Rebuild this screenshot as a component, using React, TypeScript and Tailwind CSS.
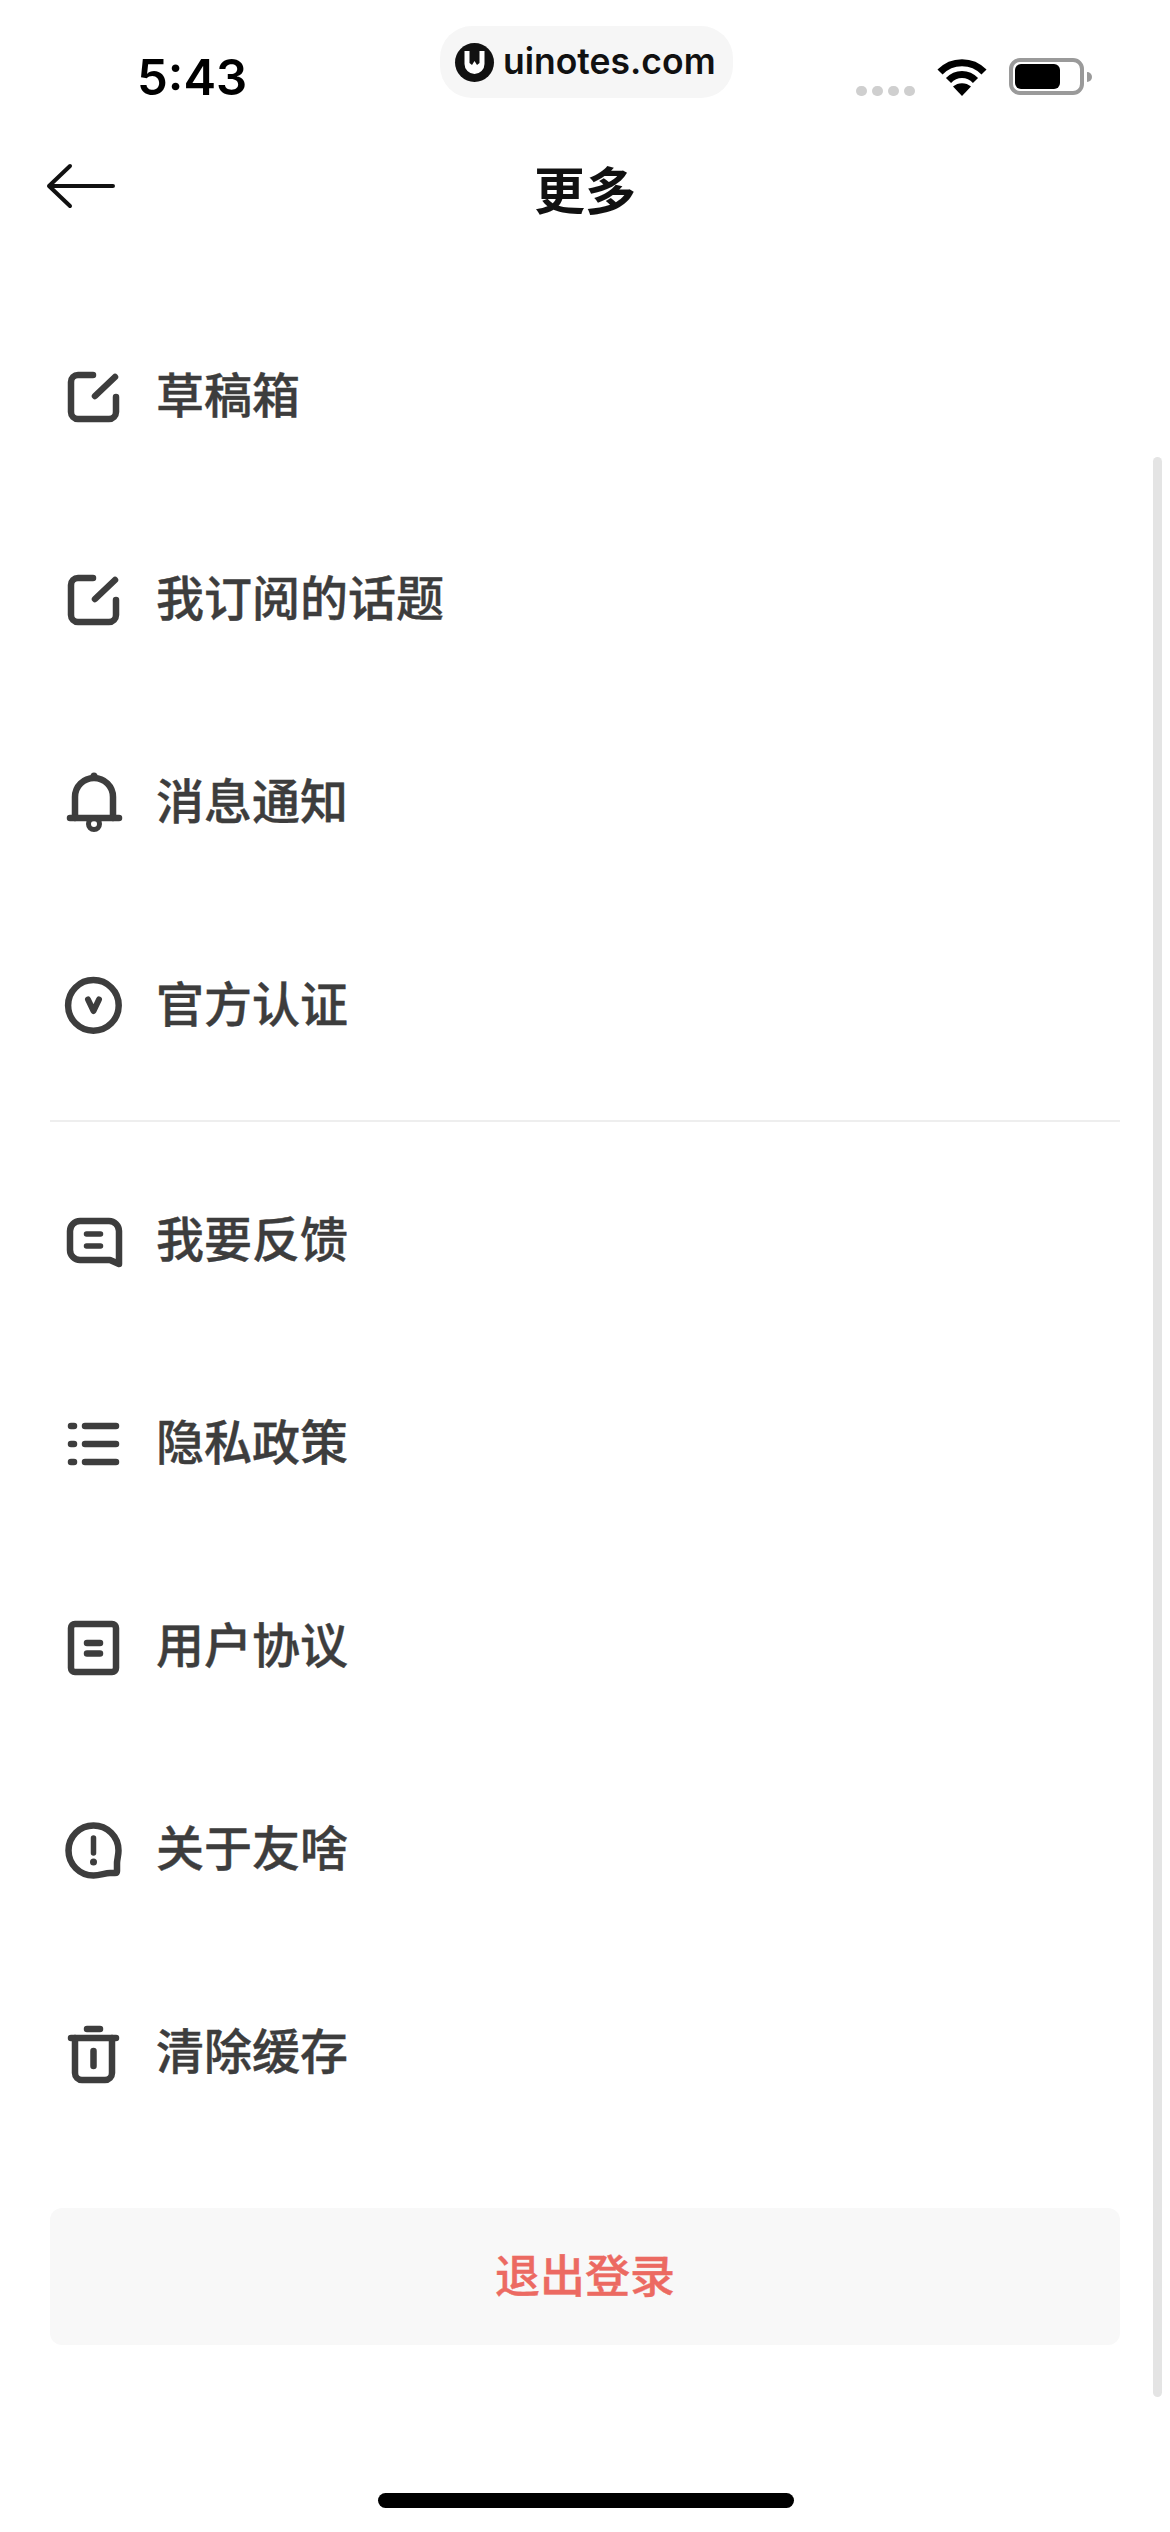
import React from "react";

const cjk = "font-['Inter','Noto_Sans_CJK_SC',sans-serif]";

function Icon({ children }: { children: React.ReactNode }) {
  return (
    <svg
      viewBox="0 0 66 66"
      width={66}
      height={66}
      fill="none"
      stroke="#3d3d3d"
      strokeWidth={6.5}
      strokeLinecap="round"
      strokeLinejoin="round"
      className="shrink-0"
    >
      {children}
    </svg>
  );
}

const EditIcon = () => (
  <Icon>
    <path d="M33 12H18a7 7 0 0 0-7 7V49a7 7 0 0 0 7 7H49a7 7 0 0 0 7-7V34" />
    <path d="M35 33L55 14" />
  </Icon>
);
const BellIcon = () => (
  <Icon>
    <path d="M15 49V28a19 19 0 0 1 38 0V49" />
    <path d="M10 49H59" />
    <circle cx={34} cy={7} r={3.5} fill="#3d3d3d" stroke="none" />
    <circle cx={34} cy={55} r={5.5} strokeWidth={5} />
  </Icon>
);
const BadgeIcon = () => (
  <Icon>
    <circle cx={33.4} cy={33.4} r={25.3} />
    <path d="M28 27.500L33.500 39L39 27.500" strokeWidth={6} />
  </Icon>
);
const ChatIcon = () => (
  <Icon>
    <path d="M20 14H49a10 10 0 0 1 10 10V57L50 53H20a10 10 0 0 1-10-10V24a10 10 0 0 1 10-10Z" />
    <path d="M26.500 27H40.500M26.500 39H40.500" strokeWidth={5.5} />
  </Icon>
);
const ListIcon = () => (
  <Icon>
    <path d="M11 16H14M11 34H14M11 52H14" />
    <path d="M25 16H56M25 34H56M25 52H56" />
  </Icon>
);
const DocIcon = () => (
  <Icon>
    <rect x={11} y={11} width={45} height={48} rx={4} />
    <path d="M27 30H40M27 40.500H40" />
  </Icon>
);
const InfoIcon = () => (
  <Icon>
    <path d="M33.500 59.500A25 25 0 1 1 58.500 34.500C58.500 40 57 43 57 47V55Q57 57 55 57H50C45 57 40 59.500 33.500 59.500Z" />
    <path d="M33.500 22V37" strokeWidth={5.5} />
    <circle cx={33.5} cy={46} r={3.5} fill="#3d3d3d" stroke="none" />
  </Icon>
);
const TrashIcon = () => (
  <Icon>
    <path d="M15 19V54a7 7 0 0 0 7 7H45a7 7 0 0 0 7-7V19" />
    <path d="M11 19H56M27 10H40" />
    <path d="M33.500 32V47" />
  </Icon>
);

function Row({ icon, label }: { icon: React.ReactNode; label: string }) {
  return (
    <div className="flex h-[203px] items-center pl-[60px] gap-[30px]">
      {icon}
      <span className="text-[48px] leading-[60px] font-medium text-[#3d3d3d] [-webkit-text-stroke:0.4px_#3d3d3d]">{label}</span>
    </div>
  );
}

export default function App() {
  return (
    <div className={`relative h-[2532px] w-[1170px] overflow-hidden bg-white ${cjk}`}>
      {/* status bar */}
      <div className="flex h-[120px] items-start justify-between pl-[137px] pr-[78px]">
        <span className="mt-[48px] text-[49px] leading-[60px] font-semibold text-black">5:43</span>
        <div className="mt-[58px] flex items-start">
          <div className="mt-[28px] flex gap-[5px]">
            <span className="h-[10px] w-[11px] rounded-full bg-[#cfcfcf]" />
            <span className="h-[10px] w-[11px] rounded-full bg-[#cfcfcf]" />
            <span className="h-[10px] w-[11px] rounded-full bg-[#cfcfcf]" />
            <span className="h-[10px] w-[11px] rounded-full bg-[#cfcfcf]" />
          </div>
          <svg viewBox="0 0 50 38" width={50} height={38} fill="none" className="ml-[22px]">
            <path d="M3 14C15 1.500 35 1.500 47 14" stroke="#000" strokeWidth={7} />
            <path d="M11.500 22.500C19 14.500 31 14.500 38.500 22.500" stroke="#000" strokeWidth={7} />
            <path d="M25 38L16 28.500C21 24 29 24 34 28.500Z" fill="#000" />
          </svg>
          <div className="ml-[22px] flex items-center">
            <div className="h-[37px] w-[75px] rounded-[11px] border-[4px] border-[#9a9a9a] p-[2px]">
              <div className="h-full w-[45px] rounded-[6px] bg-black" />
            </div>
            <div className="ml-[3px] h-[10px] w-[5px] rounded-r-full bg-[#9a9a9a]" />
          </div>
        </div>
      </div>

      {/* watermark pill */}
      <div className="absolute left-[440px] top-[26px] flex h-[72px] w-[293px] items-center rounded-[32px] bg-[#f6f6f6] pl-[15px]">
        <div className="h-[39px] w-[39px] shrink-0 rounded-full bg-[#111]">
          <svg viewBox="0 0 39 39" width={39} height={39}>
            <path d="M9.500 8H14.500V20L17 22 19.500 18 22 22 24.500 20V8H29.500V21a10 10 0 0 1-20 0Z" fill="#fff" />
          </svg>
        </div>
        <span className="ml-[9px] text-[35.5px] leading-[44px] font-semibold text-[#111]">uinotes.com</span>
      </div>

      {/* nav */}
      <div className="grid h-[140px] grid-cols-[1fr_auto_1fr] items-center">
        <svg viewBox="0 0 120 60" width={120} height={60} fill="none" className="mt-[-2px] ml-[1px]">
          <path d="M48 27H112M69 7L48 27L69 47" stroke="#111" strokeWidth={4} strokeLinecap="round" strokeLinejoin="round" />
        </svg>
        <span className="mt-[3px] text-[51px] leading-[60px] font-bold text-[#111]">更多</span>
        <span />
      </div>

      <div className="mt-[34px]">
        <Row icon={<EditIcon />} label="草稿箱" />
        <Row icon={<EditIcon />} label="我订阅的话题" />
        <Row icon={<BellIcon />} label="消息通知" />
        <Row icon={<BadgeIcon />} label="官方认证" />
      </div>

      <div className="mx-[50px] mt-[14px] h-[2px] bg-[#eeeeee]" />

      <div className="mt-[16px]">
        <Row icon={<ChatIcon />} label="我要反馈" />
        <Row icon={<ListIcon />} label="隐私政策" />
        <Row icon={<DocIcon />} label="用户协议" />
        <Row icon={<InfoIcon />} label="关于友啥" />
        <Row icon={<TrashIcon />} label="清除缓存" />
      </div>

      <div className="mx-[50px] mt-[55px] flex h-[137px] items-center justify-center rounded-[12px] bg-[#f8f8f8]">
        <span className="text-[45px] leading-[56px] font-medium text-[#ec6a62] [-webkit-text-stroke:0.4px_#ec6a62]">退出登录</span>
      </div>

      {/* scrollbar */}
      <div className="absolute left-[1153px] top-[457px] h-[1940px] w-[9px] rounded-full bg-[#e4e4e4]" />

      {/* home indicator */}
      <div className="absolute bottom-[24px] left-[378px] h-[15px] w-[416px] rounded-full bg-black" />
    </div>
  );
}
